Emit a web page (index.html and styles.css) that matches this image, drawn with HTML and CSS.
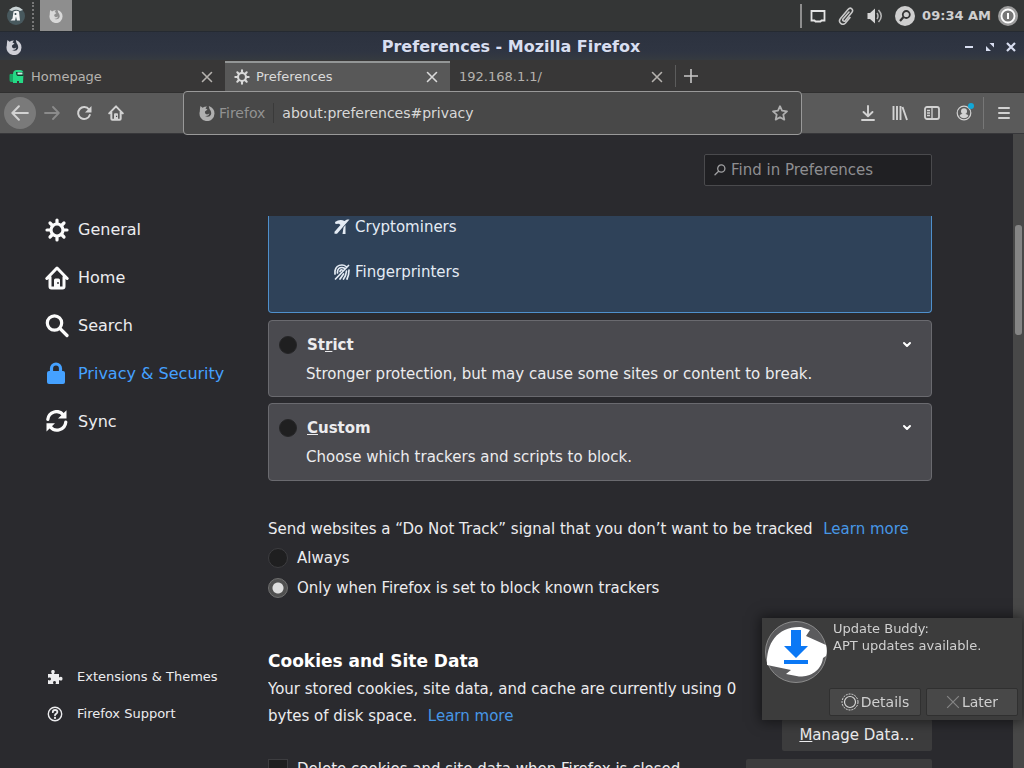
FILE: index.html
```html
<!DOCTYPE html>
<html lang="en">
<head>
<meta charset="utf-8">
<title>Preferences - Mozilla Firefox</title>
<link rel="stylesheet" href="styles.css">
</head>
<body>
<svg class="defs" aria-hidden="true">
  <symbol id="gear" viewBox="0 0 24 24"><g fill="none" stroke="currentColor" stroke-linecap="round"><circle cx="12" cy="12" r="6" stroke-width="3.2"/><path stroke-width="3.2" d="M12 2v3M12 19v3M2 12h3M19 12h3M5 5l2 2M17 17l2 2M19 5l-2 2M7 17l-2 2"/></g></symbol>
  <symbol id="home" viewBox="0 0 24 24"><path fill="none" stroke="currentColor" stroke-width="3" stroke-linecap="round" stroke-linejoin="round" d="M1.800 12.500 12 2l10.200 10.500M5 11v9.500q0 1.500 1.500 1.500h11q1.500 0 1.500-1.500V11"/><path fill="currentColor" d="M9 22v-8q0-1.500 1.500-1.500h3q1.500 0 1.500 1.500v8z"/><path fill="#2a2a2e" d="M12.300 16h1.400v2h-1.400z"/></symbol>
  <symbol id="search" viewBox="0 0 24 24"><g fill="none" stroke="currentColor" stroke-width="3.200" stroke-linecap="round"><circle cx="9.500" cy="9" r="7.200"/><path d="m15 14.500 7 7"/></g></symbol>
  <symbol id="find" viewBox="0 0 12 12"><g fill="none" stroke="currentColor" stroke-width="1.300" stroke-linecap="round"><circle cx="7.300" cy="4.500" r="3.600"/><path d="M4.600 7.200 1 10.800"/></g></symbol>
  <symbol id="lock" viewBox="0 0 24 24"><path fill="none" stroke="currentColor" stroke-width="3.200" d="M6.500 12V6.500a4.500 4.500 0 0 1 9 0V12"/><rect x="2" y="9" width="18" height="13" rx="2" fill="currentColor"/></symbol>
  <symbol id="sync" viewBox="0 0 24 24"><path fill="none" stroke="currentColor" stroke-width="3.200" stroke-linecap="round" d="M2.800 9.500A8.800 8.800 0 0 1 18.500 5M20.800 12A8.800 8.800 0 0 1 5 16.500"/><path fill="currentColor" d="M21.500.2v8.300H13zM1.500 21.500v-8.300H10z"/></symbol>
  <symbol id="close" viewBox="0 0 12 12"><path fill="none" stroke="currentColor" stroke-width="1.600" stroke-linecap="round" d="m1.500 1.500 9 9m0-9-9 9"/></symbol>
  <symbol id="fox" viewBox="0 0 16 16"><path fill="currentColor" fill-rule="evenodd" d="M1.500 1 3.500 2.800Q5.500 1.600 8 1.500 7 2.500 6.500 3.500L8.500 4.500 6 6.500Q5.500 9 8 9.500L10.500 8.500Q9.500 11.500 6 11 10.500 13 12 9.500 12.800 6.500 10.500 4L9.800 1Q15.500 3 15.500 8.500A7.500 7.500 0 1 1 .8 6.500Q.8 3 1.500 1z"/></symbol>
  <symbol id="chevron" viewBox="0 0 12 12"><path fill="none" stroke="currentColor" stroke-width="2" stroke-linecap="round" stroke-linejoin="round" d="m3 4 3 3 3-3"/></symbol>
</svg>

<header class="panel">
  <button class="launcher" aria-label="Applications"><svg viewBox="0 0 20 20"><circle cx="10" cy="10" r="9" fill="#48595e"/><path fill="#cbd4d6" d="M3 4q7-7 14 0l-3 1Q10 2.500 6 5z"/><path fill="#f2f4f5" d="M7.500 5.500q3-1.500 5.500 0l1 9h-3l-1-4-1 4H4.500l2-2z"/><circle cx="9.500" cy="8" r="1" fill="#31454c"/></svg></button>
  <span class="grip"></span>
  <button class="task" aria-label="Firefox window"><svg class="i14"><use href="#fox"/></svg></button>
  <div class="tray">
    <svg class="i16" viewBox="0 0 16 16"><path fill="none" stroke="#e4e4e4" stroke-width="1.800" d="M1.500 3h13v9.500h-3l-1 1h-5l-1-1h-3z"/></svg>
    <svg class="i18" viewBox="0 0 18 18"><path fill="none" stroke="#c9c9c9" stroke-width="1.600" stroke-linecap="round" d="m12 5-6 7c-1 1.600 1 3 2.300 1.600l6.500-8C17.300 2.500 13.500-.5 11 2.500l-7.500 9c-3 4 2 7.500 5 4.500l4.500-5.500"/></svg>
    <svg class="i18" viewBox="0 0 18 18"><path fill="#d5d5d5" d="M1.500 6H4l5-4.500v15L4 12H1.500z"/><path fill="none" stroke="#b5b5b5" stroke-width="1.500" d="M11 6q2 3 0 6M12.500 3q5.500 6 0 12"/></svg>
    <svg class="i20" viewBox="0 0 20 20"><circle cx="10" cy="10" r="10" fill="#cecece"/><circle cx="11.300" cy="8.500" r="3.500" fill="none" stroke="#333" stroke-width="1.800"/><path stroke="#333" stroke-width="2.200" d="m8.500 11-3.500 4"/></svg>
    <time>09:34 AM</time>
    <svg class="i20" viewBox="0 0 20 20"><circle cx="10" cy="10" r="10" fill="#9d9d9d"/><circle cx="10" cy="10" r="6.500" fill="#777" stroke="#fff" stroke-width="1.800"/><path stroke="#fff" stroke-width="2" d="M10 7v6"/></svg>
  </div>
</header>

<div class="titlebar">
  <svg class="i16"><use href="#fox"/></svg>
  <h1>Preferences - Mozilla Firefox</h1>
  <div class="wm">
    <button aria-label="Minimize"><svg viewBox="0 0 10 10"><path stroke="currentColor" stroke-width="2" d="M1 5h8"/></svg></button>
    <button aria-label="Maximize"><svg viewBox="0 0 10 10"><path fill="currentColor" d="M4.500 1H9v4.500zM1 4l5 5H1z"/></svg></button>
    <button aria-label="Close"><svg viewBox="0 0 10 10"><path stroke="currentColor" stroke-width="2.200" d="m1 1 8 8m0-8L1 9"/></svg></button>
  </div>
</div>

<nav class="tabs" aria-label="Tabs">
  <div class="tab"><svg class="i16" viewBox="0 0 16 16"><path fill="#19a866" d="M1 5h3v8H2q-1.500 0-1.500-2V6z"/><path fill="#25d985" d="M4 5q0-4 4-4h3q3 0 3.500 3l-.5 10h-4v-2H8v2H4z"/><path fill="#103d2b" d="M7 3h7.500v4H8.500Q7 6 7 3z"/><path fill="#c8f4e4" d="M8.500 3.500h5v2h-5z"/></svg><span>Homepage</span><button aria-label="Close tab"><svg class="i12"><use href="#close"/></svg></button></div>
  <div class="tab active"><svg class="i16"><use href="#gear"/></svg><span>Preferences</span><button aria-label="Close tab"><svg class="i12"><use href="#close"/></svg></button></div>
  <div class="tab"><span>192.168.1.1/</span><button aria-label="Close tab"><svg class="i12"><use href="#close"/></svg></button></div>
  <button class="newtab" aria-label="New tab"><svg class="i14" viewBox="0 0 16 16"><path stroke="currentColor" stroke-width="1.800" d="M8 0v16M0 8h16"/></svg></button>
</nav>

<div class="toolbar">
  <div class="group">
    <button class="back" aria-label="Back"><svg class="i18" viewBox="0 0 16 16"><path fill="none" stroke="currentColor" stroke-width="1.800" stroke-linecap="round" stroke-linejoin="round" d="M15 8H1.500M7 2 1.200 8 7 14"/></svg></button>
    <button class="dim" aria-label="Forward"><svg class="i16" viewBox="0 0 16 16"><path fill="none" stroke="currentColor" stroke-width="1.800" stroke-linecap="round" stroke-linejoin="round" d="M1 8h13.500M9 2l5.800 6L9 14"/></svg></button>
    <button aria-label="Reload"><svg class="i16" viewBox="0 0 16 16"><path fill="none" stroke="currentColor" stroke-width="2" stroke-linecap="round" d="M13 4.500A6 6 0 1 0 13.800 10"/><path fill="currentColor" d="M15.500 1v6.500H9z"/></svg></button>
    <button aria-label="Home"><svg class="i16"><use href="#home"/></svg></button>
  </div>
  <div class="urlbar">
    <svg class="i16"><use href="#fox"/></svg><span class="ident">Firefox</span>
    <input type="text" aria-label="Address" value="about:preferences#privacy">
    <button aria-label="Bookmark"><svg class="i16" viewBox="0 0 16 16"><path fill="none" stroke="currentColor" stroke-width="1.800" stroke-linejoin="round" d="m8 1.200 2 4.500 5 .6-3.700 3.300 1 5L8 12.200l-4.300 2.400 1-5L1 6.300l5-.6z"/></svg></button>
  </div>
  <div class="group end">
    <button aria-label="Downloads"><svg class="i16" viewBox="0 0 16 16"><path fill="none" stroke="currentColor" stroke-width="1.900" stroke-linecap="round" stroke-linejoin="round" d="M8 1v10M3.500 7 8 11.300 12.500 7M2 15h12"/></svg></button>
    <button aria-label="Library"><svg class="i16" viewBox="0 0 16 16"><path fill="none" stroke="currentColor" stroke-width="1.900" d="M1.500 1v14M5 1v14M8.500 1v14M10.500 2l4.500 13"/></svg></button>
    <button aria-label="Sidebars"><svg class="i16" viewBox="0 0 16 16"><rect x="1" y="2" width="14" height="12" rx="2" fill="none" stroke="currentColor" stroke-width="1.800"/><path stroke="currentColor" stroke-width="1.300" d="M8 2v12M3 5.500h3M3 8h3M3 10.500h3"/></svg></button>
    <button aria-label="Account"><svg class="i20" viewBox="0 0 20 20"><circle cx="10" cy="10" r="6.800" fill="none" stroke="currentColor" stroke-width="1.200"/><circle cx="10" cy="8.200" r="3" fill="currentColor"/><path fill="currentColor" d="M5.500 13q1-2.500 3-2h3q2 0 3 2-4.500 4.500-9 0z"/><circle cx="17" cy="3" r="3" fill="#12a8d8"/></svg></button>
    <button class="menu" aria-label="Menu"><svg class="i16" viewBox="0 0 16 16"><path stroke="currentColor" stroke-width="2" stroke-linecap="round" d="M3 3h10M3 8h10M3 13h10"/></svg></button>
  </div>
</div>

<div class="page">
  <aside class="side">
    <nav class="cats" aria-label="Categories">
      <a href="#general"><svg class="i24"><use href="#gear"/></svg>General</a>
      <a href="#home-page"><svg class="i24"><use href="#home"/></svg>Home</a>
      <a href="#search-page"><svg class="i24"><use href="#search"/></svg>Search</a>
      <a class="current" href="#privacy"><svg class="i24"><use href="#lock"/></svg>Privacy &amp; Security</a>
      <a href="#sync-page"><svg class="i24"><use href="#sync"/></svg>Sync</a>
    </nav>
    <nav class="links" aria-label="More">
      <a href="#addons"><svg class="i16" viewBox="0 0 16 16"><path fill="currentColor" d="M1 5h4C3.500 2.500 4.300 1 6 1s2.500 1.500 1 4h5v3.500c2-1.300 3.500-.5 3.500 1.200S14 12.300 12 11v4H8.500c1-2 .2-3-1-3s-2 1-1 3H1v-4c2 1 3 .2 3-1s-1-2-3-1z"/></svg>Extensions &amp; Themes</a>
      <a href="#support"><svg class="i16" viewBox="0 0 16 16"><circle cx="8" cy="8" r="6.700" fill="none" stroke="currentColor" stroke-width="1.400"/><path fill="none" stroke="currentColor" stroke-width="1.800" stroke-linecap="round" d="M5.800 6.200c0-3 4.600-2.800 4.600-.2C10.400 7.700 8 7.700 8 9.300"/><circle cx="8" cy="11.900" r="1.100" fill="currentColor"/></svg>Firefox Support</a>
    </nav>
  </aside>

  <main class="main">
    <div class="findrow">
      <label class="find"><svg class="i12"><use href="#find"/></svg><input type="text" aria-label="Find in Preferences" placeholder="Find in Preferences"></label>
    </div>
    <div class="scroll">
      <section class="card standard">
        <ul>
          <li><svg class="i16" viewBox="0 0 16 16"><path fill="currentColor" d="M1 3Q6-.5 10.500 2L13 .5h2.500L3 14.800H.5v-2L6.500 6 5 4.800 1.500 5zM9.500 8.500l2-2.500v9h-3z"/></svg>Cryptominers</li>
          <li><svg class="i16" viewBox="0 0 16 16"><g fill="none" stroke="currentColor" stroke-width="1.700" stroke-linecap="round"><path d="M1 10V7q1-6 7-6 2.500 0 4 1.500M3.500 9V7.500q.5-4 4.500-4 1.200 0 2 .5M6 7.500q.5-2 2-1.500M14.500 1.500 1.500 15M12.500 7Q12 12 9.500 15M15 6q0 5-2 9M9.500 10 6 15"/></g></svg>Fingerprinters</li>
        </ul>
      </section>
      <section class="card">
        <div class="cardhead"><input type="radio" name="level" id="strict"><label for="strict">St<u>r</u>ict</label><button aria-label="Expand Strict"><svg class="i12"><use href="#chevron"/></svg></button></div>
        <p>Stronger protection, but may cause some sites or content to break.</p>
      </section>
      <section class="card">
        <div class="cardhead"><input type="radio" name="level" id="custom"><label for="custom"><u>C</u>ustom</label><button aria-label="Expand Custom"><svg class="i12"><use href="#chevron"/></svg></button></div>
        <p>Choose which trackers and scripts to block.</p>
      </section>

      <section class="dnt">
        <p>Send websites a “Do Not Track” signal that you don’t want to be tracked <a class="more" href="#dnt">Learn more</a></p>
        <div class="opt"><input type="radio" name="dnt" id="always"><label for="always">Always</label></div>
        <div class="opt"><input type="radio" name="dnt" id="only" checked><label for="only">Only when Firefox is set to block known trackers</label></div>
      </section>

      <section class="cookies">
        <div class="desc">
          <h2>Cookies and Site Data</h2>
          <p>Your stored cookies, site data, and cache are currently using 0 bytes of disk space. <a class="more" href="#cookies">Learn more</a></p>
          <div class="opt"><input type="checkbox" id="del"><label for="del">Delete cookies and site data when Firefox is closed</label></div>
        </div>
        <div class="actions">
          <button><u>M</u>anage Data…</button>
          <button class="wide" aria-label="Manage permissions"></button>
        </div>
      </section>
    </div>
  </main>
  <div class="scrollbar"><span></span></div>
</div>

<div class="toast" role="alert">
  <svg class="logo" viewBox="0 0 62 62"><circle cx="31" cy="31" r="30.500" fill="#5b5b5d" stroke="#8b8b8b"/><path fill="#fff" d="M2 44C1 22 13 5 36 6l9 3-4 6 20 9c1 4 1 8 0 11l-3 2c-2 14-14 19-24 18.500L21 53l5-4z"/><path fill="#0b78f5" d="M26 9h10v16h7L31 37 19 25h7zM19 39h24v4H19z"/></svg>
  <div class="body">
    <p>Update Buddy:<br>APT updates available.</p>
    <div class="btns">
      <button><svg class="i18" viewBox="0 0 18 18"><g fill="none" stroke="#d8d8d8"><circle cx="9" cy="9" r="8" stroke-dasharray="2 1"/><circle cx="9" cy="9" r="5.500" stroke-width="1.200"/></g></svg>Details</button>
      <button><svg class="i14" viewBox="0 0 12 12"><path stroke="#858585" d="m1 1 10 10m0-10L1 11"/></svg>Later</button>
    </div>
  </div>
</div>
</body>
</html>
```
FILE: styles.css
```css
* { box-sizing: border-box; }
body {
  margin: 0;
  height: 100vh;
  display: flex;
  flex-direction: column;
  overflow: hidden;
  background: #2a2a2e;
  color: #f1f1f3;
  font: 15px/20px "DejaVu Sans", sans-serif;
}
p, h1, h2, ul { margin: 0; padding: 0; }
button { margin: 0; padding: 0; border: 0; background: none; color: inherit; font: inherit; }
input { font: inherit; color: inherit; }
svg { display: block; flex: none; }
a { color: inherit; text-decoration: none; }
.defs { position: absolute; width: 0; height: 0; }
.i12 { width: 12px; height: 12px; }
.i14 { width: 14px; height: 14px; }
.i16 { width: 16px; height: 16px; }
.i18 { width: 18px; height: 18px; }
.i20 { width: 20px; height: 20px; }
.i24 { width: 24px; height: 24px; }

.panel { flex: none; height: 32px; display: flex; align-items: center; background: #343636; border-bottom: 1px solid #252a31; }
.launcher { width: 32px; display: flex; justify-content: center; }
.launcher svg { width: 20px; height: 20px; }
.grip { height: 28px; border-left: 2px dotted #777; margin-right: 6px; }
.task { align-self: stretch; width: 32px; display: flex; align-items: center; justify-content: center; background: #8e8e8e; color: #d8d8d8; }
.tray { margin-left: auto; display: flex; align-items: center; gap: 11px; padding: 0 6px 0 8px; height: 24px; border-left: 2px solid #8e8e8e; }
.tray time { font-size: 13px; font-weight: bold; color: #cfcfcf; margin: 0 -4px; }

.titlebar { flex: none; height: 28px; display: flex; align-items: center; justify-content: space-between; padding: 2px 8px 0 6px; background: linear-gradient(#2c323f, #2f3542 70%, #353a40); color: #d8def0; }
.titlebar .i16 { color: #cfd0d8; margin-right: 36px; }
.titlebar h1 { font-size: 16px; line-height: 20px; }
.wm { display: flex; gap: 11px; }
.wm svg { width: 10px; height: 10px; }

.tabs { flex: none; height: 32px; display: flex; background: #383737; color: #b5b2ae; font-size: 13px; }
.tab { flex: 0 1 225px; display: flex; align-items: center; gap: 6px; padding: 0 12px 2px 9px; border-top: 2px solid transparent; margin-top: 1px; }
.tab span { flex: 1; }
.active { background: #585858; border-top-color: #939696; color: #dadada; }
.newtab { display: flex; align-items: center; margin: 5px 0; padding-left: 8px; border-left: 1px solid #5c5c5c; color: #c8c8c8; }

.toolbar { flex: none; height: 42px; display: flex; align-items: center; background: #5a5a5a; border-top: 1px solid #303030; border-bottom: 1px solid #37373a; color: #d2d2d2; position: relative; z-index: 1; }
.group { flex: none; width: 183px; display: flex; align-items: center; padding-left: 4px; }
.group button { width: 32px; height: 32px; display: flex; align-items: center; justify-content: center; }
.group .back { background: #7a7a7a; border-radius: 50%; }
.group .dim { color: #8b8b8b; }
.end { width: 222px; justify-content: flex-end; padding: 0; }
.group .menu { border-left: 1px solid #777; width: 41px; margin-left: 3px; }
.urlbar { flex: 1; align-self: stretch; margin: -2px 0; display: flex; align-items: center; gap: 4px; padding: 0 13px 0 15px; background: #484848; border: 1px solid #999; border-radius: 4px; color: #b0b0b0; }
.ident { color: #929292; padding-right: 8px; border-right: 1px solid #3a3a3a; font-size: 14px; }
.urlbar input { flex: 1; min-width: 0; border: 0; background: none; outline: 0; color: #d8d8d8; padding: 0 4px; font-size: 14px; }

.page { flex: 1; min-height: 0; display: flex; color: #ececee; }
.side { flex: none; width: 268px; display: flex; flex-direction: column; justify-content: space-between; padding: 72px 0 36px 45px; }
.cats, .links { display: flex; flex-direction: column; }
.cats a { height: 48px; display: flex; align-items: center; gap: 9px; font-size: 16px; }
.cats svg { color: #fbfbfb; }
.cats .current, .cats .current svg { color: #45a1ff; }
.links a { height: 37px; display: flex; align-items: center; gap: 14px; padding-left: 2px; font-size: 13px; }

.main { flex: 0 1 664px; min-width: 0; display: flex; flex-direction: column; }
.findrow { flex: none; height: 82px; padding-top: 20px; display: flex; justify-content: flex-end; align-items: flex-start; }
.find { width: 228px; height: 32px; display: flex; align-items: center; gap: 5px; padding: 0 9px; background: #202023; border: 1px solid #4a4a4d; color: #a0a0a2; border-radius: 2px; }
.find input { flex: 1; min-width: 0; border: 0; padding: 0; background: none; outline: 0; font-size: 15px; }
.find input::placeholder { color: #8e8e91; opacity: 1; }
.scroll { flex: 1; min-height: 0; overflow: hidden; display: flex; flex-direction: column; }
.scroll > * { flex: none; }

.card { background: #4a4a4f; border: 1px solid #6a6a6f; border-radius: 4px; height: 77px; padding: 14px 18px 0 10px; margin-bottom: 6px; }
.card + .card + .card { height: 78px; }
.standard { height: auto; background: #2f4259; border-color: #4f90cc; border-top: 0; border-radius: 0 0 4px 4px; padding: 1px 0 30px 65px; margin-bottom: 7px; color: #e4ebf4; }
.card ul { list-style: none; display: flex; flex-direction: column; gap: 25px; }
.card li { display: flex; align-items: center; gap: 5px; }
.cardhead { display: flex; align-items: center; gap: 10px; height: 20px; margin-bottom: 9px; font-weight: bold; }
.cardhead button { margin-left: auto; color: #fff; }
.card p { padding-left: 27px; }
input[type=radio], input[type=checkbox] { appearance: none; flex: none; margin: 0; width: 20px; height: 20px; background: #1f1f20; border: 1px solid #3d3d40; }
input[type=radio] { border-radius: 50%; }
.cardhead input[type=radio] { width: 18px; height: 18px; border-color: #262628; }
input[type=radio]:checked { background: radial-gradient(circle, #dedede 0 5px, #505050 6px); border-color: #707070; }

.dnt { margin-top: 32px; }
.more { color: #4797e6; margin-left: 6px; }
.opt { height: 20px; display: flex; align-items: center; gap: 9px; margin-top: 10px; white-space: nowrap; }
.dnt .opt:first-of-type { margin-top: 9px; }
.cookies { margin-top: 51px; display: flex; justify-content: space-between; }
.desc { flex: 0 1 478px; min-width: 0; }
h2 { font-size: 17px; line-height: 24px; color: #fff; }
.desc p { line-height: 27px; margin-top: 3px; }
.desc .opt { margin-top: 29px; }
.actions { display: flex; flex-direction: column; align-items: flex-end; gap: 8px; padding-top: 70px; }
.actions button { width: 150px; height: 32px; background: #3c3c3d; border-radius: 2px; }
.actions .wide { width: 186px; }

.scrollbar { margin-left: auto; width: 11px; background: #484848; padding: 91px 2px 0; }
.scrollbar span { display: block; height: 110px; background: #858585; border-radius: 3px; }

.toast { position: fixed; right: 2px; bottom: 48px; z-index: 2; width: 260px; height: 102px; display: flex; gap: 6px; padding: 2px 4px 4px 3px; background: #3c3c3c; box-shadow: 0 0 12px 2px rgba(0, 0, 0, .5); color: #d0d0d0; font-size: 13px; line-height: 17px; }
.logo { width: 62px; height: 62px; margin-top: 1px; }
.body { flex: 1; display: flex; flex-direction: column; justify-content: space-between; }
.btns { display: flex; gap: 5px; margin-left: -4px; }
.btns button { flex: 1; height: 28px; display: flex; align-items: center; justify-content: center; gap: 2px; background: #484848; border: 1px solid #303030; border-radius: 2px; font-size: 14px; }
.body p { white-space: nowrap; }
```
